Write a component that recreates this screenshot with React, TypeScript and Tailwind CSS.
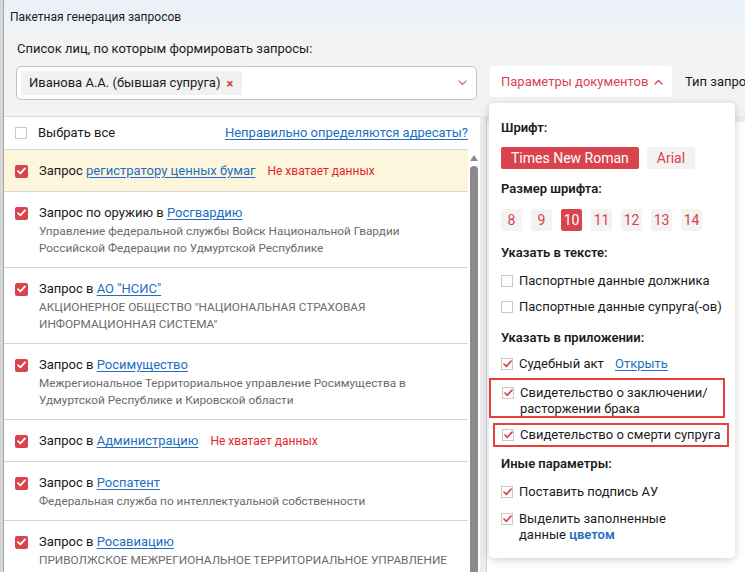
import React from "react"

const RED = "#d9434e"

const rows = [
  { pre: "Запрос ", link: "регистратору ценных бумаг", warn: true, yellow: true, desc: [] as string[] },
  {
    pre: "Запрос по оружию в ",
    link: "Росгвардию",
    desc: ["Управление федеральной службы Войск Национальной Гвардии", "Российской Федерации по Удмуртской Республике"],
  },
  {
    pre: "Запрос в ",
    link: 'АО "НСИС"',
    desc: ['АКЦИОНЕРНОЕ ОБЩЕСТВО "НАЦИОНАЛЬНАЯ СТРАХОВАЯ', 'ИНФОРМАЦИОННАЯ СИСТЕМА"'],
  },
  {
    pre: "Запрос в ",
    link: "Росимущество",
    desc: ["Межрегиональное Территориальное управление Росимущества в", "Удмуртской Республике и Кировской области"],
  },
  { pre: "Запрос в ", link: "Администрацию", warn: true, desc: [] },
  { pre: "Запрос в ", link: "Роспатент", desc: ["Федеральная служба по интеллектуальной собственности"] },
  { pre: "Запрос в ", link: "Росавиацию", desc: ["ПРИВОЛЖСКОЕ МЕЖРЕГИОНАЛЬНОЕ ТЕРРИТОРИАЛЬНОЕ УПРАВЛЕНИЕ"] },
]

function RedCheck() {
  return (
    <span className="flex h-[13px] w-[13px] shrink-0 items-center justify-center rounded-[2px] bg-[#d9434e]">
      <svg width="9" height="8" viewBox="0 0 9 8" fill="none">
        <path d="M1 4.2 3.4 6.4 8 1.4" stroke="white" strokeWidth="1.8" strokeLinecap="round" strokeLinejoin="round" />
      </svg>
    </span>
  )
}

function LightCheck({ checked }: { checked?: boolean }) {
  return (
    <span className="flex h-[12px] w-[12px] shrink-0 items-center justify-center border border-[#c9c9c9] bg-white">
      {checked && (
        <svg width="9" height="8" viewBox="0 0 9 8" fill="none">
          <path d="M1 4 3.3 6.3 8 1.2" stroke={RED} strokeWidth="1.7" strokeLinecap="round" strokeLinejoin="round" />
        </svg>
      )}
    </span>
  )
}

function Chevron({ up }: { up?: boolean }) {
  return (
    <svg width="9" height="6" viewBox="0 0 9 6" fill="none">
      <path
        d={up ? "M1 5 4.5 1.5 8 5" : "M1 1 4.5 4.5 8 1"}
        stroke={up ? RED : "#d9717a"}
        strokeWidth="1.3"
        strokeLinecap="round"
        strokeLinejoin="round"
      />
    </svg>
  )
}

function Option({ checked, children }: { checked?: boolean; children: React.ReactNode }) {
  return (
    <div className="flex items-center gap-[6px] whitespace-nowrap leading-[20px]">
      <LightCheck checked={checked} />
      <span>{children}</span>
    </div>
  )
}

export default function App() {
  return (
    <div className="relative flex h-[572px] w-[745px] overflow-hidden bg-[#e2e2e2] font-['Roboto',sans-serif] text-[13px] text-[#1b1b1b]">
      <div className="w-[3px] shrink-0 bg-[#d6d6d6]" />
      <div className="flex min-w-0 flex-1 flex-col border-l border-[#a9a9a9] bg-[#f3f3f3]">
        <div className="flex h-[33px] shrink-0 items-center bg-gradient-to-b from-[#eaf1f8] to-[#eff3f7] pl-[6px] text-[12px]">
          Пакетная генерация запросов
        </div>

        <div className="mt-[6px] shrink-0 pl-[13px] leading-[20px]">Список лиц, по которым формировать запросы:</div>

        <div className="mt-[7px] flex shrink-0 items-start pl-[12px]">
          <div className="flex h-[34px] w-[461px] shrink-0 items-center justify-between rounded-[5px] border border-[#c4c4c4] bg-white pl-[4px] pr-[9px]">
            <div className="flex h-[24px] items-center gap-[6px] bg-[#f1f1f1] pl-[8px] pr-[9px]">
              Иванова А.А. (бывшая супруга)
              <span className="text-[13px] font-bold leading-none text-[#e0303a]">×</span>
            </div>
            <Chevron />
          </div>
          <div className="ml-[13px] flex h-[31px] w-[182px] shrink-0 items-center gap-[6px] whitespace-nowrap rounded-[3px] bg-white pl-[11px] text-[#d9434e]">
            Параметры документов
            <Chevron up />
          </div>
          <div className="ml-[13px] mt-[6px] whitespace-nowrap">Тип запросов</div>
        </div>

        <div className="mt-[16px] flex min-h-0 flex-1 overflow-hidden">
          <div className="flex w-[476px] shrink-0 flex-col border-t border-[#d9d9d9] bg-white">
            <div className="flex h-[32px] shrink-0 items-center pl-[11px] pr-[12px]">
              <LightCheck />
              <span className="ml-[11px]">Выбрать все</span>
              <span className="ml-auto text-[#1e6fc0] underline underline-offset-2">
                Неправильно определяются адресаты?
              </span>
            </div>
            <div className="flex min-h-0 flex-1">
              <div className="flex-1 border-t border-[#d6d6d6]">
                {rows.map((r, i) => (
                  <div
                    key={i}
                    className={`flex border-b border-[#d6d6d6] pb-[10px] pl-[11px] pt-[11px] ${r.yellow ? "bg-[#fdf6dc]" : ""}`}
                  >
                    <div className="flex h-[20px] items-center">
                      <RedCheck />
                    </div>
                    <div className="ml-[11px]">
                      <div className="flex items-center whitespace-nowrap leading-[20px]">
                        <span>
                          {r.pre}
                          <span className="text-[#1e6fc0] underline underline-offset-2">{r.link}</span>
                        </span>
                        {r.warn && <span className="ml-[12px] text-[12px] text-[#e3262c]">Не хватает данных</span>}
                      </div>
                      {r.desc.map((d) => (
                        <div key={d} className="whitespace-nowrap text-[11.8px] leading-[17px] text-[#6b6b6b]">
                          {d}
                        </div>
                      ))}
                    </div>
                  </div>
                ))}
              </div>
              <div className="flex w-[12px] flex-col items-center bg-white pt-[6px]">
                <svg width="8" height="6" viewBox="0 0 8 6">
                  <path d="M0 6 4 0 8 6Z" fill="#8a8a8a" />
                </svg>
                <div className="mt-[5px] w-[8px] flex-1 rounded-t-full bg-[#8a8a8a]" />
              </div>
            </div>
          </div>
          <div className="w-[7px] shrink-0 border-r border-[#d0d0d0] bg-[#ececec]" />
          <div className="-mt-[9px] flex flex-1 flex-col bg-white">
            <div className="h-[15px] bg-[#e5ecf2]" />
          </div>
        </div>
      </div>

      <div className="absolute left-[489px] top-[103px] flex h-[455px] w-[246px] flex-col rounded-[5px] bg-white pl-[12px] pt-[15px] shadow-[0_2px_8px_rgba(0,0,0,0.18)]">
        <div className="font-semibold leading-[20px]">Шрифт:</div>
        <div className="mt-[9px] flex gap-[8px] text-[14px]">
          <div className="flex h-[22px] items-center rounded-[2px] bg-[#d9434e] px-[10px] text-white">Times New Roman</div>
          <div className="flex h-[22px] items-center rounded-[2px] bg-[#f2f2f2] px-[10px] text-[#d9434e]">Arial</div>
        </div>
        <div className="mt-[10px] font-semibold leading-[20px]">Размер шрифта:</div>
        <div className="mt-[10px] flex gap-[9px] text-[14px]">
          {[8, 9, 10, 11, 12, 13, 14].map((n) => (
            <div
              key={n}
              className={`flex h-[22px] w-[21px] items-center justify-center rounded-[2px] ${
                n === 10 ? "bg-[#d9434e] text-white" : "bg-[#f3f3f3] text-[#d9434e]"
              }`}
            >
              {n}
            </div>
          ))}
        </div>
        <div className="mt-[12px] font-semibold leading-[20px]">Указать в тексте:</div>
        <div className="mt-[8px] flex flex-col gap-[6px]">
          <Option>Паспортные данные должника</Option>
          <Option>Паспортные данные супруга(-ов)</Option>
        </div>
        <div className="mt-[11px] font-semibold leading-[20px]">Указать в приложении:</div>
        <div className="mt-[6px]">
          <Option checked>
            Судебный акт <span className="ml-[8px] text-[#1e6fc0] underline underline-offset-2">Открыть</span>
          </Option>
        </div>
        <div className="-ml-[12px] mt-[4px] flex h-[40px] w-[236px] items-start border-2 border-[#e6403e] pl-[11px] pt-[5px] leading-[16px]">
          <div className="mt-[2px]">
            <LightCheck checked />
          </div>
          <div className="ml-[6px] whitespace-nowrap">
            Свидетельство о заключении/
            <br />
            расторжении брака
          </div>
        </div>
        <div className="-ml-[8px] mt-[5px] flex h-[24px] w-[236px] items-center whitespace-nowrap border-2 border-[#e6403e] pl-[7px]">
          <LightCheck checked />
          <span className="ml-[6px]">Свидетельство о смерти супруга</span>
        </div>
        <div className="mt-[7px] font-semibold leading-[20px]">Иные параметры:</div>
        <div className="mt-[8px]">
          <Option checked>Поставить подпись АУ</Option>
        </div>
        <div className="mt-[9px] flex items-start leading-[16px]">
          <div className="mt-[2px]">
            <LightCheck checked />
          </div>
          <div className="ml-[6px] whitespace-nowrap">
            Выделить заполненные
            <br />
            данные <span className="font-semibold text-[#1e6fc0]">цветом</span>
          </div>
        </div>
      </div>
    </div>
  )
}
